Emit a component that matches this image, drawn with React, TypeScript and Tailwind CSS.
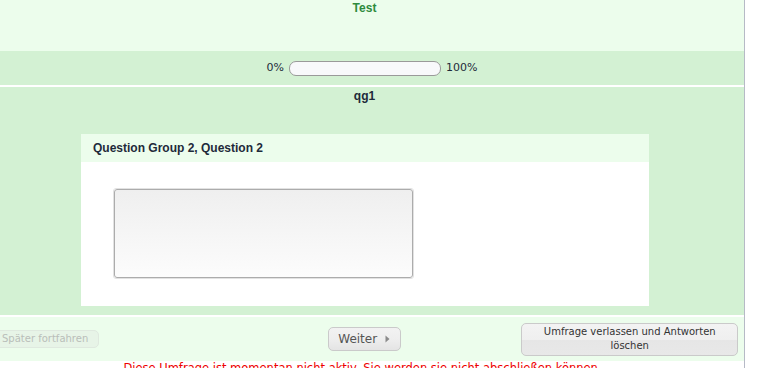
import React from "react";

const dv = { fontFamily: '"DejaVu Sans", Verdana, sans-serif' };
const lib = { fontFamily: '"Liberation Sans", Arial, sans-serif' };

export default function App() {
  return (
    <div className="w-[781px] h-[368px] overflow-hidden bg-white">
      <div className="w-[745px] h-[368px] border-r border-[#b6bac6]">
        {/* Title band */}
        <div className="h-[51px] bg-[#ecfdec] pt-px pr-[15px] text-center">
          <div style={lib} className="text-[12px] leading-[14px] font-bold text-[#2e8b3d]">
            Test
          </div>
        </div>

        {/* Progress band */}
        <div style={dv} className="h-[34px] bg-[#d3f1d3] flex items-center justify-center text-[11px] text-[#1e2a3a]">
          <span>0%</span>
          <div className="mx-[5px] w-[152px] h-[15px] rounded-[7px] border border-[#9a9a9a] bg-[#f8f9fb]" />
          <span>100%</span>
        </div>

        <div className="h-[2px] bg-white" />

        {/* Group band */}
        <div className="bg-[#d3f1d3] pt-[2px] pb-[9px]">
          <div style={lib} className="pr-[15px] text-center text-[12px] leading-[14px] font-bold text-[#1e2a3a]">
            qg1
          </div>
          <div className="mt-[31px] ml-[81px] w-[568px]">
            <div style={lib} className="bg-[#ecfdec] px-[12px] py-[7px] text-[12px] leading-[14px] font-bold text-[#1e2a3a]">
              Question Group 2, Question 2
            </div>
            <div className="bg-white pt-[26px] pb-[27px] pl-[32px]">
              <div className="w-[301px] h-[91px] border border-[#e2e2e2] rounded-[3px]">
                <div className="w-full h-full rounded-[3px] border border-[#acacac] bg-gradient-to-b from-[#efefef] to-[#fcfcfc]" />
              </div>
            </div>
          </div>
        </div>

        <div className="h-[2px] bg-white" />

        {/* Footer */}
        <div style={dv} className="h-[44px] bg-[#ecfdec] flex items-center">
          <button className="shrink-0 ml-[-10px] h-[18px] pl-[11px] pr-[10px] rounded-[5px] border border-[#dfe9df] bg-[#e7f4e7] text-[10px] leading-[16px] text-[#b9beb9]">
            Später fortfahren
          </button>
          <button className="shrink-0 ml-[229px] h-[24px] w-[73px] pl-[9px] rounded-[5px] border border-[#cacaca] bg-gradient-to-b from-[#f2f2f2] via-[#eeeeee] to-[#e4e4e4] flex items-center text-[12px] text-[#555555]">
            <span>Weiter</span>
            <svg width="5" height="8" viewBox="0 0 5 8" className="ml-[8px]">
              <path d="M0.5 0.5 L4.5 4 L0.5 7.5 Z" fill="#8a8a8a" />
            </svg>
          </button>
          <button className="shrink-0 ml-[120px] w-[217px] h-[33px] rounded-[5px] border border-[#cacaca] flex items-center justify-center text-center text-[10px] leading-[14px] text-[#333333] bg-[linear-gradient(to_bottom,#f3f3f3_0%,#efefef_50%,#e6e6e6_50%,#e8e8e8_100%)]">
            Umfrage verlassen und Antworten
            <br />
            löschen
          </button>
        </div>

        {/* Warning */}
        <div style={dv} className="pt-px pr-[19px] text-center text-[11.5px] leading-[13px] text-[#ee0000] whitespace-nowrap">
          Diese Umfrage ist momentan nicht aktiv. Sie werden sie nicht abschließen können.
        </div>
      </div>
    </div>
  );
}
